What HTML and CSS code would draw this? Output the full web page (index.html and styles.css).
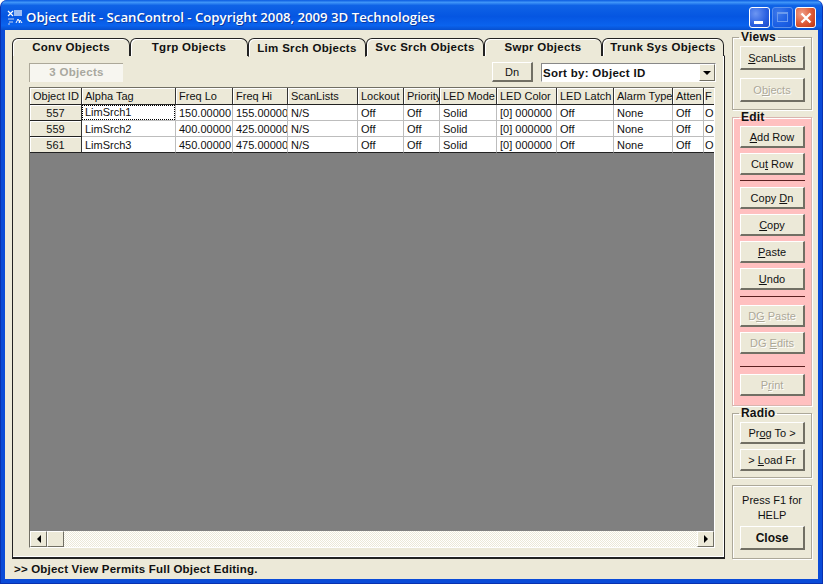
FILE: index.html
```html
<!DOCTYPE html>
<html lang="en">
<head>
    <meta charset="UTF-8">
    <title>Object Edit - ScanControl</title>
    <link rel="stylesheet" href="styles.css">
</head>
<body>

<div class="window">
    <div class="titlebar">
        <svg class="app-icon" width="16" height="16" viewBox="0 0 16 16">
            <path d="M1 2l5 5M6 2L1 7" stroke="#fff" stroke-width="1.2"/>
            <path d="M8 1v6M10 1v6M12 1v6M14 1v6" stroke="#fff" stroke-width="1.2"/>
            <path d="M1 10h6M2 13h4M1 15h2" stroke="#c9d6ee" stroke-width="1.2"/>
            <path d="M9 14l2-4 2 4M12 14l1-3 2 3" stroke="#fff" fill="none"/>
        </svg>
        <span class="title-text">Object Edit - ScanControl - Copyright 2008, 2009 3D Technologies</span>
        <div class="win-buttons">
            <div class="win-btn min"><span></span></div>
            <div class="win-btn max"><span></span></div>
            <div class="win-btn close">
                <svg width="20" height="20" viewBox="0 0 20 20"><path d="M5.5 5.5l9 9M14.5 5.5l-9 9" stroke="#fff" stroke-width="2.4"/></svg>
            </div>
        </div>
    </div>

    <div class="client">
        <div class="main">
            <div class="tab-area">
                <div class="tabs">
                    <div class="tab">Conv Objects</div>
                    <div class="tab">Tgrp Objects</div>
                    <div class="tab active">Lim Srch Objects</div>
                    <div class="tab">Svc Srch Objects</div>
                    <div class="tab">Swpr Objects</div>
                    <div class="tab last">Trunk Sys Objects</div>
                </div>
                <div class="tab-panel">
                    <div class="toolbar">
                        <div class="count-box">3 Objects</div>
                        <button class="btn dn-btn">Dn</button>
                        <div class="combo">
                            <span class="combo-text">Sort by: Object ID</span>
                            <div class="combo-arrow"><i class="arrow-down"></i></div>
                        </div>
                    </div>
                    <div class="grid-box">
                        <div class="grid-scroll">
                            <table class="grid">
                                <colgroup>
                                    <col class="c-id"><col class="c-tag"><col class="c-lo"><col class="c-hi">
                                    <col class="c-lists"><col class="c-lock"><col class="c-prio"><col class="c-mode">
                                    <col class="c-color"><col class="c-latch"><col class="c-alarm"><col class="c-atten"><col class="c-f">
                                </colgroup>
                                <thead>
                                    <tr>
                                        <th>Object ID</th><th>Alpha Tag</th><th>Freq Lo</th><th>Freq Hi</th>
                                        <th>ScanLists</th><th>Lockout</th><th>Priority</th><th>LED Mode</th>
                                        <th>LED Color</th><th>LED Latch</th><th>Alarm Type</th><th>Atten</th><th>F</th>
                                    </tr>
                                </thead>
                                <tbody>
                                    <tr>
                                        <td class="row-head">557</td><td class="focus"><span>LimSrch1</span></td><td>150.00000</td><td>155.00000</td>
                                        <td>N/S</td><td>Off</td><td>Off</td><td>Solid</td>
                                        <td>[0] 000000</td><td>Off</td><td>None</td><td>Off</td><td>O</td>
                                    </tr>
                                    <tr>
                                        <td class="row-head">559</td><td>LimSrch2</td><td>400.00000</td><td>425.00000</td>
                                        <td>N/S</td><td>Off</td><td>Off</td><td>Solid</td>
                                        <td>[0] 000000</td><td>Off</td><td>None</td><td>Off</td><td>O</td>
                                    </tr>
                                    <tr>
                                        <td class="row-head">561</td><td>LimSrch3</td><td>450.00000</td><td>475.00000</td>
                                        <td>N/S</td><td>Off</td><td>Off</td><td>Solid</td>
                                        <td>[0] 000000</td><td>Off</td><td>None</td><td>Off</td><td>O</td>
                                    </tr>
                                </tbody>
                            </table>
                        </div>
                        <div class="hscroll">
                            <div class="sb-btn"><i class="arrow-left"></i></div>
                            <div class="sb-btn sb-thumb"></div>
                            <div class="sb-track"></div>
                            <div class="sb-btn"><i class="arrow-right"></i></div>
                        </div>
                    </div>
                </div>
            </div>

            <div class="side">
                <fieldset class="group views">
                    <legend>Views</legend>
                    <button class="btn tall"><u>S</u>canLists</button>
                    <button class="btn tall" disabled>O<u>b</u>jects</button>
                </fieldset>
                <fieldset class="group edit">
                    <legend>Edit</legend>
                    <button class="btn"><u>A</u>dd Row</button>
                    <button class="btn">Cu<u>t</u> Row</button>
                    <hr class="sep">
                    <button class="btn">Copy <u>D</u>n</button>
                    <button class="btn"><u>C</u>opy</button>
                    <button class="btn"><u>P</u>aste</button>
                    <button class="btn"><u>U</u>ndo</button>
                    <hr class="sep sep-mid">
                    <button class="btn" disabled>D<u>G</u> Paste</button>
                    <button class="btn" disabled>DG <u>E</u>dits</button>
                    <hr class="sep sep-low">
                    <button class="btn" disabled>P<u>r</u>int</button>
                </fieldset>
                <fieldset class="group radio">
                    <legend>Radio</legend>
                    <button class="btn">Pr<u>o</u>g To &gt;</button>
                    <button class="btn">&gt; <u>L</u>oad Fr</button>
                </fieldset>
                <div class="group help">
                    <p>Press F1 for HELP</p>
                    <button class="btn tall close-btn">Close</button>
                </div>
            </div>
        </div>
        <div class="status">&gt;&gt; Object View Permits Full Object Editing.</div>
    </div>
</div>

</body>
</html>
```

FILE: styles.css
```css
* {
    box-sizing: border-box;
}
html, body {
    height: 100%;
    margin: 0;
    overflow: hidden;
}
body {
    background: #fff;
    font-family: "Liberation Sans", Arial, sans-serif;
    font-size: 11px;
    color: #111;
}

/* Window frame */
.window {
    width: 823px;
    height: 584px;
    display: flex;
    flex-direction: column;
    background: #0a4bd8;
    border-radius: 7px 7px 0 0;
    padding: 0 4px 4px;
    border-left: 1px solid #0831b0;
    border-right: 1px solid #0831b0;
    border-bottom: 1px solid #0831b0;
}
.titlebar {
    height: 30px;
    margin: 0 -4px;
    padding: 4px 6px 0 6px;
    display: flex;
    align-items: center;
    border-radius: 7px 7px 0 0;
    background: linear-gradient(180deg, #0a5ae0 0%, #3f95f8 8%, #0f63e6 18%, #0556e2 55%, #0a63ee 85%, #0750cf 100%);
}
.app-icon {
    flex: none;
    margin-right: 3px;
}
.title-text {
    flex: 1;
    font-family: "Open Sans", sans-serif;
    font-weight: 600;
    font-size: 13.2px;
    color: #fff;
    text-shadow: 1px 1px 0 #0a3aa0;
    white-space: nowrap;
}
.win-buttons {
    display: flex;
    gap: 2px;
}
.win-btn {
    width: 21px;
    height: 21px;
    border: 1px solid #fff;
    border-radius: 3px;
    position: relative;
    background: radial-gradient(circle at 30% 30%, #6d96f2 0%, #2a5fe0 60%, #1b48c8 100%);
}
.win-btn.min span {
    position: absolute;
    left: 4px;
    bottom: 3px;
    width: 9px;
    height: 3px;
    background: #fff;
}
.win-btn.max {
    opacity: 0.55;
    border-color: #9dbcf5;
}
.win-btn.max span {
    position: absolute;
    left: 4px;
    top: 4px;
    width: 11px;
    height: 10px;
    border: 1px solid #bcd0f6;
    border-top-width: 2px;
}
.win-btn.close {
    background: radial-gradient(circle at 30% 30%, #f0a08a 0%, #dd5a36 55%, #b93312 100%);
}
.win-btn.close svg {
    display: block;
}

/* Client area */
.client {
    flex: 1;
    background: #ece9d8;
    display: flex;
    flex-direction: column;
    min-height: 0;
}
.main {
    flex: 1;
    display: flex;
    min-height: 0;
    padding-left: 7px;
}
.tab-area {
    width: 713px;
    padding-top: 8px;
    display: flex;
    flex-direction: column;
}
.tabs {
    display: flex;
    height: 17px;
    position: relative;
}
.tab {
    width: 118px;
    height: 18px;
    border: 1px solid #222;
    border-bottom: none;
    border-radius: 6px 7px 0 0;
    background: #ece9d8;
    text-align: center;
    font-weight: bold;
    font-size: 11.5px;
    letter-spacing: 0.3px;
    line-height: 16px;
    white-space: nowrap;
    box-shadow: inset 1px 1px 0 #fff;
}
.tab.last {
    width: 122px;
}
.tab.active {
    height: 19px;
    line-height: 18px;
    position: relative;
    z-index: 2;
    border-bottom: 1px solid #ece9d8;
}
.tab-panel {
    flex: 1;
    border: 1px solid #222;
    border-top: 1px solid #fff;
    border-bottom-width: 2px;
    box-shadow: inset -1px -1px 0 #fff;
    padding: 7px 9px 9px 16px;
    display: flex;
    flex-direction: column;
}
.toolbar {
    height: 20px;
    display: flex;
    align-items: flex-start;
    margin-bottom: 4px;
}
.count-box {
    width: 94px;
    height: 19px;
    background: #f7f6f0;
    border-left: 1px solid #aca899;
    border-top: 1px solid #aca899;
    text-align: center;
    line-height: 17px;
    font-weight: bold;
    font-size: 11.5px;
    letter-spacing: 0.3px;
    color: #a9a89f;
}
.btn.dn-btn {
    width: 41px;
    height: 20px;
    margin: -1px 0 0 auto;
}
.combo {
    width: 175px;
    height: 19px;
    margin-left: 8px;
    margin-right: -1px;
    display: flex;
    align-items: center;
    background: #fff;
    border-left: 1px solid #888;
    border-top: 1px solid #888;
    border-right: 1px solid #fff;
    border-bottom: 1px solid #fff;
}
.combo-text {
    flex: 1;
    padding-left: 1px;
    font-weight: bold;
    font-size: 11.5px;
    letter-spacing: 0.3px;
}
.combo-arrow {
    width: 16px;
    height: 17px;
    background: #ece9d8;
    border-top: 1px solid #fff;
    border-left: 1px solid #fff;
    border-right: 1px solid #716f64;
    border-bottom: 1px solid #716f64;
    display: flex;
    align-items: center;
    justify-content: center;
}
.arrow-down {
    border-top: 4px solid #000;
    border-left: 4px solid transparent;
    border-right: 4px solid transparent;
}
.arrow-left {
    border-right: 4px solid #000;
    border-top: 4px solid transparent;
    border-bottom: 4px solid transparent;
}
.arrow-right {
    border-left: 4px solid #000;
    border-top: 4px solid transparent;
    border-bottom: 4px solid transparent;
}

/* Data grid */
.grid-box {
    flex: 1;
    display: flex;
    flex-direction: column;
    min-height: 0;
    border-left: 1px solid #716f64;
    border-top: 1px solid #716f64;
    border-right: 1px solid #fff;
    border-bottom: 1px solid #fff;
}
.grid-scroll {
    flex: 1;
    min-height: 0;
    overflow: hidden;
    background: #808080;
}
.grid {
    table-layout: fixed;
    width: 684px;
    border-collapse: separate;
    border-spacing: 0;
    background: #fff;
}
.c-id { width: 52px; }
.c-tag { width: 94px; }
.c-lo { width: 57px; }
.c-hi { width: 55px; }
.c-lists { width: 70px; }
.c-lock { width: 46px; }
.c-prio { width: 36px; }
.c-mode { width: 57px; }
.c-color { width: 60px; }
.c-latch { width: 57px; }
.c-alarm { width: 59px; }
.c-atten { width: 31px; }
.c-f { width: 10px; }
.grid th, .grid td {
    height: 16px;
    padding: 0 0 0 3px;
    overflow: hidden;
    white-space: nowrap;
    font-weight: normal;
    text-align: left;
    font-size: 11px;
}
.grid th {
    height: 17px;
    background: #ece9d8;
    border-right: 1px solid #333;
    border-bottom: 1px solid #222;
    box-shadow: inset 1px 1px 0 #fff;
}
.grid td {
    border-right: 1px solid #bdbdbd;
    border-bottom: 1px solid #bdbdbd;
}
.grid th:last-child, .grid td:last-child {
    padding-left: 1px;
    border-right: none;
}
.grid tr:last-child td {
    border-bottom-color: #222;
}
.grid td.row-head {
    background: #ece9d8;
    text-align: center;
    border-right: 1px solid #333;
    border-bottom: 1px solid #222;
    box-shadow: inset 1px 1px 0 #fff;
    padding-left: 0;
}
.grid td.focus {
    padding: 0;
}
.grid td.focus span {
    display: block;
    height: 15px;
    padding-left: 2px;
    line-height: 13px;
    border: 1px dotted #000;
}
.hscroll {
    height: 16px;
    display: flex;
}
.sb-btn {
    width: 17px;
    flex: none;
    background: #ece9d8;
    border-top: 1px solid #fff;
    border-left: 1px solid #fff;
    border-right: 1px solid #716f64;
    border-bottom: 1px solid #716f64;
    display: flex;
    align-items: center;
    justify-content: center;
}
.sb-track {
    flex: 1;
    background: conic-gradient(#ece9d8 25%, #fff 0 50%, #ece9d8 0 75%, #fff 0) 0 0 / 2px 2px;
}

/* Right column */
.side {
    width: 80px;
    margin-left: 7px;
    display: flex;
    flex-direction: column;
}
.group {
    margin: 0;
    padding: 2px 0 0 7px;
    min-width: 0;
    border: 1px solid #aca899;
    box-shadow: inset 1px 1px 0 #fff, 1px 1px 0 #fff;
}
.group legend {
    padding: 0 2px;
    margin-left: -1px;
    line-height: 14px;
    font-weight: bold;
    font-size: 12px;
    letter-spacing: 0.2px;
    color: #111;
}
.views {
    height: 80px;
}
.edit {
    height: 296px;
    background: #ffc0c0;
    border-color: #d9b4ae;
}
.radio {
    height: 72px;
}
.help {
    height: 74px;
    margin-top: 7px;
    padding-top: 7px;
    text-align: center;
}
.help p {
    margin: 0 0 3px -7px;
    width: 78px;
    line-height: 15px;
    font-size: 11px;
}
.btn {
    display: block;
    width: 65px;
    height: 22px;
    margin: 0 0 5px;
    padding: 0;
    font-family: inherit;
    font-size: 11px;
    color: #111;
    background: #ece9d8;
    border-top: 1px solid #fff;
    border-left: 1px solid #fff;
    border-right: 2px solid #716f64;
    border-bottom: 2px solid #716f64;
}
.btn.tall {
    height: 24px;
    margin-bottom: 8px;
}
.btn:disabled {
    color: #aca899;
    text-shadow: 1px 1px 0 #fff;
}
.close-btn {
    font-weight: bold;
    font-size: 12px;
}
.sep {
    width: 65px;
    height: 1px;
    margin: 0 0 6px;
    border: none;
    background: #5a2020;
}
.sep-mid {
    margin: 6px 0 8px;
}
.sep-low {
    margin: 12px 0 7px;
}
.status {
    height: 20px;
    padding: 3px 0 0 9px;
    font-weight: bold;
    font-size: 11.5px;
    letter-spacing: 0.2px;
    line-height: 15px;
}
```
